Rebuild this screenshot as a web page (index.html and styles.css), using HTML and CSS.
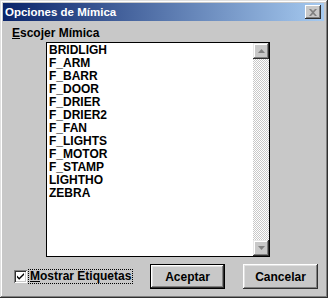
FILE: index.html
```html
<!DOCTYPE html>
<html>
<head>
<meta charset="utf-8">
<link rel="stylesheet" href="styles.css">
</head>
<body>
<div class="window">
  <div class="titlebar">
    <span class="title">Opciones de Mímica</span>
    <span class="close"><svg width="8" height="7" viewBox="0 0 8 7"><path d="M0 0h2l2 2 2-2h2L5 3.5 8 7H6L4 5 2 7H0l3-3.5z" fill="#808080"/><path d="M1 1h1l2 2 2-2h1L4.5 3.5 7 6H6L4 4 2 6H1l2.5-2.5z" fill="#fff" opacity="0"/></svg></span>
  </div>
  <div class="body">
    <div class="caption"><u>E</u>scojer Mímica</div>
    <div class="listbox">
      <ul class="items">
        <li>BRIDLIGH</li>
        <li>F_ARM</li>
        <li>F_BARR</li>
        <li>F_DOOR</li>
        <li>F_DRIER</li>
        <li>F_DRIER2</li>
        <li>F_FAN</li>
        <li>F_LIGHTS</li>
        <li>F_MOTOR</li>
        <li>F_STAMP</li>
        <li>LIGHTHO</li>
        <li>ZEBRA</li>
      </ul>
      <div class="scrollbar">
        <div class="sbtn"><svg width="7" height="4" viewBox="0 0 7 4"><path d="M3.5 0L7 4H0z" fill="#808080"/></svg></div>
        <div class="track"></div>
        <div class="sbtn"><svg width="7" height="4" viewBox="0 0 7 4"><path d="M0 0h7L3.5 4z" fill="#808080"/></svg></div>
      </div>
    </div>
    <div class="footer">
      <div class="check">
        <span class="box"><svg width="9" height="9" viewBox="0 0 9 9"><path d="M1 3.5l2.2 2.2L8 1v2L3.2 7.7 1 5.5z" fill="#000"/></svg></span>
        <span class="check-label"><u>M</u>ostrar Etiquetas</span>
      </div>
      <div class="buttons">
        <div class="btn default"><span>Aceptar</span></div>
        <div class="btn"><span>Cancelar</span></div>
      </div>
    </div>
  </div>
</div>
</body>
</html>
```
FILE: styles.css
```css
html, body {
  margin: 0;
  padding: 0;
}
body {
  width: 328px;
  height: 298px;
  background: #c8c8c8;
  font-family: "Liberation Sans", Arial, sans-serif;
  font-weight: bold;
  font-size: 12px;
  color: #000;
}
.window {
  box-sizing: border-box;
  width: 328px;
  height: 298px;
  padding: 3px 4px 4px 3px;
  background: #c8c8c8;
  box-shadow: inset -1px -1px #303030, inset 1px 1px #e0e0e0, inset -2px -2px #808080, inset 2px 2px #fff;
  display: flex;
  flex-direction: column;
}
.titlebar {
  height: 18px;
  background: linear-gradient(to right, #0a246a, #a6caf0);
  display: flex;
  align-items: center;
  justify-content: space-between;
  padding: 0 3px 0 2px;
  flex: none;
}
.title {
  color: #fff;
  font-size: 11.5px;
  letter-spacing: 0;
}
.close {
  width: 16px;
  height: 14px;
  box-sizing: border-box;
  background: #c8c8c8;
  box-shadow: inset -1px -1px #303030, inset 1px 1px #fff, inset -2px -2px #808080;
  display: flex;
  align-items: center;
  justify-content: center;
}
.body {
  flex: 1;
  display: flex;
  flex-direction: column;
}
.caption {
  margin: 5px 0 0 9px;
  height: 15px;
  line-height: 15px;
}
.listbox {
  margin: 1px 0 0 43px;
  width: 224px;
  height: 215px;
  box-sizing: border-box;
  border: 1px solid #000;
  background: #fff;
  display: flex;
}
.items {
  list-style: none;
  margin: 0;
  padding: 1px 0 0 2px;
  flex: 1;
}
.items li {
  height: 13px;
  line-height: 13px;
}
.scrollbar {
  width: 16px;
  display: flex;
  flex-direction: column;
}
.sbtn {
  width: 16px;
  height: 16px;
  box-sizing: border-box;
  background: #c8c8c8;
  box-shadow: inset -1px -1px #303030, inset 1px 1px #e8e8e8, inset -2px -2px #808080, inset 2px 2px #fff;
  display: flex;
  align-items: center;
  justify-content: center;
  flex: none;
}
.track {
  flex: 1;
  background: repeating-conic-gradient(#fff 0 25%, #c8c8c8 0 50%) 0 0 / 2px 2px;
}
.footer {
  margin-top: 7px;
  display: flex;
  align-items: flex-start;
  justify-content: space-between;
  padding: 0 6px 0 11px;
}
.check {
  display: flex;
  align-items: center;
  margin-top: 6px;
}
.box {
  width: 13px;
  height: 13px;
  box-sizing: border-box;
  background: #fff;
  box-shadow: inset 1px 1px #808080, inset -1px -1px #fff, inset 2px 2px #303030, inset -2px -2px #c8c8c8;
  display: flex;
  align-items: center;
  justify-content: center;
}
.check-label {
  margin-left: 2px;
  padding: 0 1px;
  line-height: 13px;
  outline: 1px dotted #000;
}
.buttons {
  display: flex;
  gap: 18px;
}
.btn {
  width: 75px;
  height: 25px;
  box-sizing: border-box;
  background: #c8c8c8;
  box-shadow: inset -1px -1px #303030, inset 1px 1px #fff, inset -2px -2px #808080, inset 2px 2px #e0e0e0;
  display: flex;
  align-items: center;
  justify-content: center;
}
.btn.default {
  border: 1px solid #000;
}
```
